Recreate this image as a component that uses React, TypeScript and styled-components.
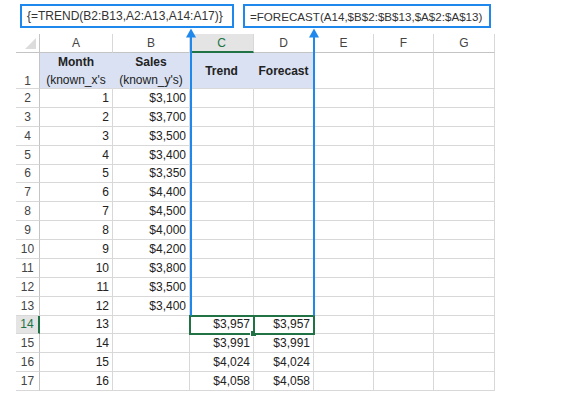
import React, { Fragment } from "react";
import styled, { createGlobalStyle, css } from "styled-components";

const Global = createGlobalStyle`
  html, body { margin: 0; padding: 0; background: #fff; }
  body { font-family: "Liberation Sans", Arial, sans-serif; }
`;

const BLUE = "#1f88ec";
const GREEN = "#217346";
const GRID = "#d8d8d8";
const BAND = "#d9e1f2";

const Page = styled.div`
  position: relative;
  width: 587px;
  height: 399px;
  padding-top: 4px;
  box-sizing: border-box;
  overflow: hidden;
`;

const FormulaRow = styled.div`
  display: flex;
  height: 24px;
  margin-bottom: 6px;
`;

const FormulaBox = styled.div<{ $left: number; $width: number; $size: number }>`
  box-sizing: border-box;
  margin-left: ${p => p.$left}px;
  width: ${p => p.$width}px;
  height: 24px;
  border: 2px solid ${BLUE};
  padding: 0 5px;
  display: flex;
  align-items: center;
  font-size: ${p => p.$size}px;
  color: #333;
  white-space: nowrap;
  background: #fff;
`;

const Sheet = styled.div`
  margin-left: 16px;
  display: grid;
  grid-template-columns: 24px 73px 77px 64px 60px 60px 60px 61px;
  grid-template-rows: 19px 36px repeat(16, 18.875px);
  width: 479px;
  font-size: 12px;
  color: #222;
`;

const Corner = styled.div`
  position: relative;
  box-sizing: border-box;
  border-right: 1px solid #c4c4c4;
  border-bottom: 1px solid #c4c4c4;
  &::after {
    content: "";
    position: absolute;
    right: 3px;
    bottom: 3px;
    border-left: 11px solid transparent;
    border-bottom: 11px solid #dcdcdc;
  }
`;

const ColHead = styled.div<{ $active?: boolean }>`
  box-sizing: border-box;
  display: flex;
  align-items: center;
  justify-content: center;
  border-right: 1px solid ${GRID};
  border-bottom: 1px solid #c4c4c4;
  color: #444;
  font-size: 12px;
  ${p =>
    p.$active &&
    css`
      background: #e4e4e4;
      color: ${GREEN};
      border-bottom: 2px solid ${GREEN};
    `}
`;

const RowHead = styled.div<{ $active?: boolean; $bottom?: boolean }>`
  box-sizing: border-box;
  display: flex;
  align-items: ${p => (p.$bottom ? "flex-end" : "center")};
  justify-content: center;
  border-right: 1px solid #c4c4c4;
  border-bottom: 1px solid ${GRID};
  color: #444;
  ${p =>
    p.$active &&
    css`
      background: #e4e4e4;
      color: ${GREEN};
      border-right: 2px solid ${GREEN};
    `}
`;

const Cell = styled.div<{
  $align?: "left" | "center" | "right";
  $band?: boolean;
  $bold?: boolean;
  $sel?: boolean;
}>`
  position: relative;
  box-sizing: border-box;
  display: flex;
  align-items: center;
  justify-content: ${p =>
    p.$align === "center" ? "center" : p.$align === "left" ? "flex-start" : "flex-end"};
  text-align: center;
  padding: 0 3px 0 3px;
  line-height: 18px;
  white-space: nowrap;
  border-right: 1px solid ${p => (p.$band ? BAND : GRID)};
  border-bottom: 1px solid ${GRID};
  background: ${p => (p.$band ? BAND : "#fff")};
  font-weight: ${p => (p.$bold ? 700 : 400)};
  ${p =>
    p.$sel &&
    css`
      outline: 2px solid ${GREEN};
      outline-offset: -1px;
      z-index: 1;
    `}
`;

const Plain = styled.span`
  font-weight: 400;
`;

const Handle = styled.span`
  position: absolute;
  right: -4px;
  bottom: -4px;
  width: 5px;
  height: 5px;
  background: ${GREEN};
  border: 1px solid #fff;
`;

const Overlay = styled.svg`
  position: absolute;
  left: 0;
  top: 0;
  pointer-events: none;
  z-index: 2;
`;

const cols = ["A", "B", "C", "D", "E", "F", "G"];
const sales = ["$3,100", "$3,700", "$3,500", "$3,400", "$3,350", "$4,400", "$4,500", "$4,000", "$4,200", "$3,800", "$3,500", "$3,400"];
const forecasts = ["$3,957", "$3,991", "$4,024", "$4,058"];

const Arrow = ({ x }: { x: number }) => (
  <g fill={BLUE}>
    <rect x={x - 1} y={33} width={2} height={282.5} />
    <polygon points={`${x},28.5 ${x - 5},37.5 ${x + 5},37.5`} />
  </g>
);

export default function App() {
  const rows = Array.from({ length: 16 }, (_, i) => i + 2);
  return (
    <Page>
      <Global />
      <FormulaRow>
        <FormulaBox $left={20} $width={214} $size={12}>{"{=TREND(B2:B13,A2:A13,A14:A17)}"}</FormulaBox>
        <FormulaBox $left={9} $width={248} $size={11.6}>=FORECAST(A14,$B$2:$B$13,$A$2:$A$13)</FormulaBox>
      </FormulaRow>
      <Sheet>
        <Corner />
        {cols.map(c => (
          <ColHead key={c} $active={c === "C"}>{c}</ColHead>
        ))}

        <RowHead $bottom>1</RowHead>
        <Cell $band $bold $align="center">
          <span>Month<br /><Plain>(known_x's</Plain></span>
        </Cell>
        <Cell $band $bold $align="center">
          <span>Sales<br /><Plain>(known_y's)</Plain></span>
        </Cell>
        <Cell $band $bold $align="center">Trend</Cell>
        <Cell $band $bold $align="center">Forecast</Cell>
        <Cell />
        <Cell />
        <Cell />

        {rows.map(r => {
          const f = r >= 14 ? forecasts[r - 14] : "";
          return (
            <Fragment key={r}>
              <RowHead $active={r === 14}>{r}</RowHead>
              <Cell>{r - 1}</Cell>
              <Cell>{r <= 13 ? sales[r - 2] : ""}</Cell>
              <Cell $sel={r === 14}>
                {f}
                {r === 14 && <Handle />}
              </Cell>
              <Cell $sel={r === 14}>{f}</Cell>
              <Cell />
              <Cell />
              <Cell />
            </Fragment>
          );
        })}
      </Sheet>
      <Overlay width={587} height={399}>
        <Arrow x={191} />
        <Arrow x={314} />
      </Overlay>
    </Page>
  );
}
